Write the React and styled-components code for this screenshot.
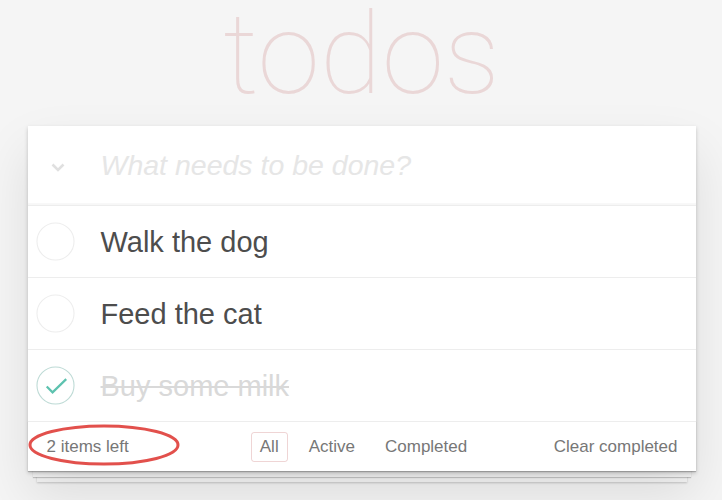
import React, { useState } from 'react';
import styled, { createGlobalStyle, css } from 'styled-components';

const GlobalStyle = createGlobalStyle`
  html, body {
    margin: 0;
    padding: 0;
    min-height: 100%;
  }
  body {
    min-height: 100vh;
    background: #f5f5f5;
    font-family: "Helvetica Neue", Helvetica, Arial, "Liberation Sans", sans-serif;
    color: #4d4d4d;
    -webkit-font-smoothing: antialiased;
  }
`;

const Page = styled.div`
  width: 668px;
  margin: 0 auto;
  padding: 0 0 40px 1px;
`;

const Title = styled.h1`
  margin: 0;
  height: 126px;
  text-align: center;
  font-family: Roboto, "Helvetica Neue", sans-serif;
  font-weight: 100;
  font-size: 113px;
  line-height: 110px;
  color: rgba(175, 47, 47, 0.15);
  text-rendering: optimizeLegibility;
`;

const Card = styled.section`
  position: relative;
  background: #fff;
  box-shadow: 0 2px 4px 0 rgba(0, 0, 0, 0.2), 0 25px 50px 0 rgba(0, 0, 0, 0.1);
`;

const NewRow = styled.header`
  display: flex;
  align-items: center;
  height: 79px;
  border-bottom: 1px solid #ededed;
  box-shadow: inset 0 -2px 1px rgba(0, 0, 0, 0.03);
`;

const ToggleAll = styled.div`
  width: 73px;
  box-sizing: border-box;
  display: flex;
  justify-content: center;
  padding: 3px 13px 0 0;
`;

const NewInput = styled.input`
  flex: 1;
  border: 0;
  outline: none;
  background: transparent;
  font-family: inherit;
  font-size: 28.5px;
  color: #4d4d4d;
  padding: 0;
  &::placeholder {
    font-style: italic;
    font-weight: 300;
    color: #e6e6e6;
  }
`;

const List = styled.ul`
  margin: 0;
  padding: 0;
  list-style: none;
`;

const Item = styled.li`
  display: flex;
  align-items: center;
  height: 71px;
  border-bottom: 1px solid #ededed;
`;

const Check = styled.div`
  width: 73px;
  box-sizing: border-box;
  display: flex;
  justify-content: center;
  padding-right: 18px;
`;

const Label = styled.label`
  font-size: 29px;
  color: #4d4d4d;
  line-height: 1.2;
  padding-top: 1px;
  ${p => p.done && css`
    color: #d9d9d9;
    text-decoration: line-through;
  `}
`;

const Footer = styled.footer`
  position: relative;
  display: grid;
  grid-template-columns: 1fr auto 1fr;
  align-items: center;
  height: 49px;
  padding: 0 18px;
  font-size: 17px;
  color: #777;
  &::before {
    content: '';
    position: absolute;
    left: 0;
    right: 0;
    bottom: 0;
    height: 50px;
    z-index: -1;
    box-shadow: 0 1px 1px rgba(0, 0, 0, 0.2),
      0 11px 0 -5px #f6f6f6,
      0 12px 1px -5px rgba(0, 0, 0, 0.2),
      0 20px 0 -9px #f6f6f6,
      0 21px 2px -9px rgba(0, 0, 0, 0.2);
  }
`;

const Count = styled.span`
  justify-self: start;
  padding: 1px 0 0 1px;
`;

const Filters = styled.ul`
  display: flex;
  gap: 12px;
  margin: 0;
  padding: 0 0 0 4px;
  list-style: none;
`;

const Filter = styled.a`
  display: block;
  padding: 4px 8px;
  border: 1px solid transparent;
  border-radius: 3px;
  color: inherit;
  text-decoration: none;
  ${p => p.selected && css`
    border-color: rgba(175, 47, 47, 0.2);
  `}
`;

const Clear = styled.button`
  justify-self: end;
  border: 0;
  background: none;
  padding: 0;
  font: inherit;
  color: inherit;
  cursor: pointer;
`;

const Mark = styled.svg`
  position: absolute;
  left: 0;
  top: 2px;
  pointer-events: none;
  overflow: visible;
`;

const Circle = ({ done }) => (
  <svg width="39" height="39" viewBox="0 0 40 40">
    <circle cx="20" cy="20" r="19" fill="none" stroke={done ? '#bddad5' : '#ededed'} strokeWidth="1.1" />
    {done && (
      <path d="M11 21l6 6 14-13.5" fill="none" stroke="#5dc2af" strokeWidth="2.3" />
    )}
  </svg>
);

const todos = [
  { id: 1, text: 'Walk the dog', done: false },
  { id: 2, text: 'Feed the cat', done: false },
  { id: 3, text: 'Buy some milk', done: true },
];

export default function App() {
  const [filter, setFilter] = useState('All');
  const left = todos.filter(t => !t.done).length;

  return (
    <>
      <GlobalStyle />
      <Page>
        <Title>todos</Title>
        <Card>
          <NewRow>
            <ToggleAll>
              <svg width="14" height="9" viewBox="0 0 14 9">
                <path d="M1.5 1.5l5.5 5.5 5.5-5.5" fill="none" stroke="#e0e0e0" strokeWidth="2.6" />
              </svg>
            </ToggleAll>
            <NewInput placeholder="What needs to be done?" />
          </NewRow>
          <List>
            {todos.map(t => (
              <Item key={t.id}>
                <Check><Circle done={t.done} /></Check>
                <Label done={t.done}>{t.text}</Label>
              </Item>
            ))}
          </List>
          <Footer>
            <Count>{left} items left</Count>
            <Filters>
              {['All', 'Active', 'Completed'].map(f => (
                <li key={f}>
                  <Filter href="#" selected={filter === f} onClick={e => { e.preventDefault(); setFilter(f); }}>
                    {f}
                  </Filter>
                </li>
              ))}
            </Filters>
            <Clear>Clear completed</Clear>
            <Mark width="152" height="42" viewBox="0 0 152 42">
              <ellipse cx="76" cy="21" rx="74" ry="19" fill="none" stroke="#e2504c" strokeWidth="3" />
            </Mark>
          </Footer>
        </Card>
      </Page>
    </>
  );
}
